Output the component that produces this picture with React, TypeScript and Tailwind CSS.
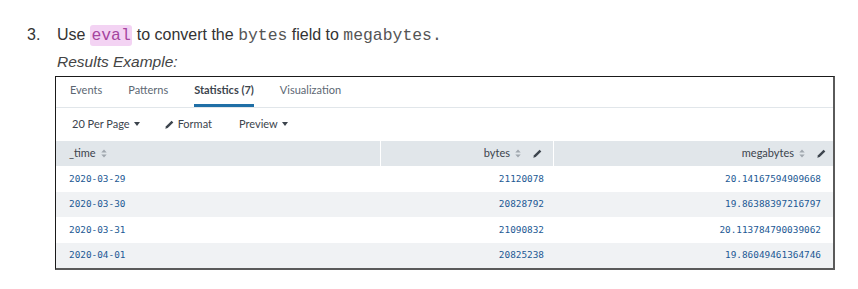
import React from "react";

const Caret = () => (
  <svg width="6" height="4" viewBox="0 0 6 4" className="inline-block ml-[4px] mb-[1px]">
    <path d="M0 0 L6 0 L3 4 Z" fill="#3c444d" />
  </svg>
);

const Pencil = ({ color = "#3c444d" }: { color?: string }) => (
  <svg width="9" height="9" viewBox="0 0 9 9" className="inline-block">
    <path d="M0.3 8.7 L1 6.3 L6.6 0.7 L8.3 2.4 L2.7 8 Z" fill={color} />
  </svg>
);

const Sort = () => (
  <svg width="6" height="9" viewBox="0 0 6 9" className="inline-block">
    <path d="M0.3 3.6 L3 0.6 L5.7 3.6 Z M0.3 5.4 L3 8.4 L5.7 5.4 Z" fill="#a0a7ae" />
  </svg>
);

const rows = [
  ["2020-03-29", "21120078", "20.14167594909668"],
  ["2020-03-30", "20828792", "19.86388397216797"],
  ["2020-03-31", "21090832", "20.113784790039062"],
  ["2020-04-01", "20825238", "19.86049461364746"],
];

export default function App() {
  return (
    <div className="w-[858px] h-[289px] bg-white overflow-hidden font-['Liberation_Sans',Arial,sans-serif] text-[#333]">
      <div className="flex pt-[25px]">
        <div className="w-[57px] pl-[27px] text-[16px] leading-[20px]">3.</div>
        <div className="flex flex-col">
          <p className="text-[16px] leading-[20px] whitespace-nowrap">
            Use{" "}
            <code className="font-['Liberation_Mono',monospace] text-[16.4px] bg-[#f3d3f3] text-[#a5459f] rounded-[3px] px-[1.5px] py-[1px]">
              eval
            </code>{" "}
            to convert the{" "}
            <code className="font-['Liberation_Mono',monospace] text-[16.4px] text-[#555]">bytes</code> field to{" "}
            <code className="font-['Liberation_Mono',monospace] text-[16.4px] text-[#555]">megabytes.</code>
          </p>
          <p className="italic text-[15.5px] leading-[20px] mt-[6px] text-[#444]">Results Example:</p>

          <div className="mt-[4px] -ml-[2px] w-[780px] border-t border-l border-[#1a1a1a] border-r-2 border-b-2 border-r-[#5a5a5a] border-b-[#5a5a5a] font-['Lato',sans-serif]">
            {/* Tabs */}
            <div className="flex h-[31px] pl-[14px] gap-[26px] border-b border-[#e1e6ea] text-[11px] text-[#5c6773]">
              <div className="flex items-center border-b-[3px] border-transparent">Events</div>
              <div className="flex items-center border-b-[3px] border-transparent">Patterns</div>
              <div className="flex items-center border-b-[3px] border-[#1f6fa6] font-bold text-[#3c444d]">
                Statistics (7)
              </div>
              <div className="flex items-center border-b-[3px] border-transparent">Visualization</div>
            </div>

            {/* Toolbar */}
            <div className="flex items-center h-[33px] pl-[16px] text-[11px] text-[#3c444d]">
              <span className="flex items-center">
                20 Per Page
                <Caret />
              </span>
              <span className="flex items-center ml-[25px] gap-[4px]">
                <Pencil />
                Format
              </span>
              <span className="flex items-center ml-[27px]">
                Preview
                <Caret />
              </span>
            </div>

            {/* Table */}
            <div className="grid grid-cols-[325px_173px_1fr] text-[11px]">
              <div className="h-[25px] bg-[#e1e6ea] border-r border-white flex items-center pl-[13px] gap-[5px] text-[#3c444d]">
                _time <Sort />
              </div>
              <div className="h-[25px] bg-[#e1e6ea] border-r border-white flex items-center justify-end pr-[11px] gap-[5px] text-[#3c444d]">
                bytes <Sort />
                <span className="ml-[7px] flex">
                  <Pencil />
                </span>
              </div>
              <div className="h-[25px] bg-[#e1e6ea] flex items-center justify-end pr-[7px] gap-[5px] text-[#3c444d]">
                megabytes <Sort />
                <span className="ml-[7px] flex">
                  <Pencil />
                </span>
              </div>

              {rows.map((r, i) => {
                const bg = i % 2 === 1 ? "bg-[#f0f2f4]" : "bg-white";
                return (
                  <React.Fragment key={i}>
                    <div
                      className={`${bg} h-[25.5px] flex items-center pl-[13px] font-['DejaVu_Sans_Mono',monospace] text-[9.4px] text-[#1c5994]`}
                    >
                      {r[0]}
                    </div>
                    <div
                      className={`${bg} h-[25.5px] flex items-center justify-end pr-[10px] font-['DejaVu_Sans_Mono',monospace] text-[9.4px] text-[#1c5994]`}
                    >
                      {r[1]}
                    </div>
                    <div
                      className={`${bg} h-[25.5px] flex items-center justify-end pr-[12px] font-['DejaVu_Sans_Mono',monospace] text-[9.4px] text-[#1c5994]`}
                    >
                      {r[2]}
                    </div>
                  </React.Fragment>
                );
              })}
            </div>
          </div>
        </div>
      </div>
    </div>
  );
}
